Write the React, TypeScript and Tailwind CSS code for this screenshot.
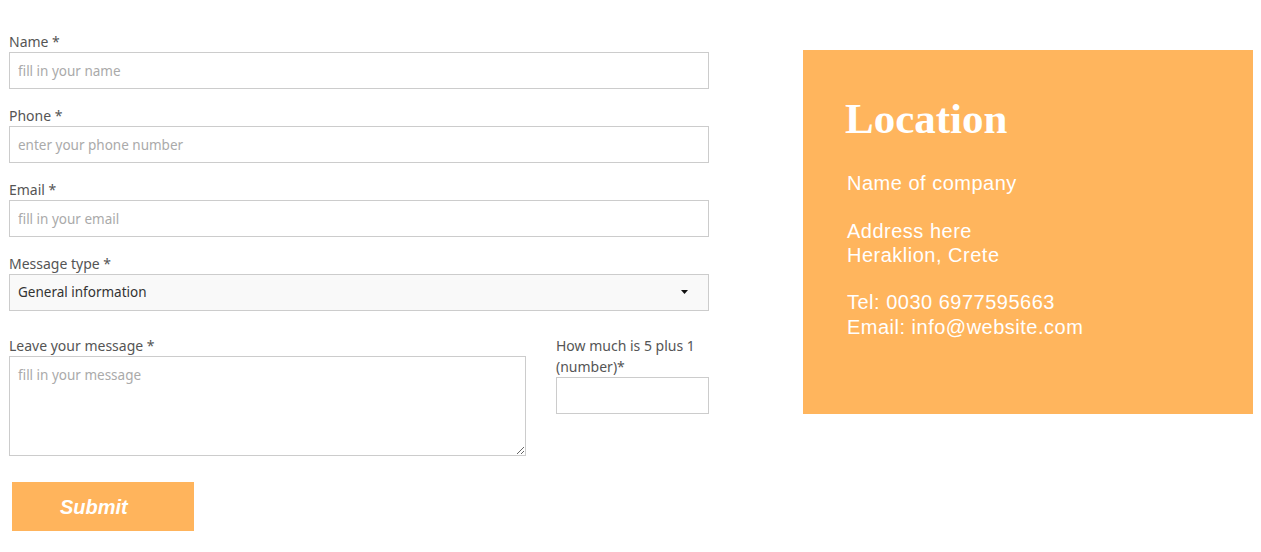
import React from 'react';

const labelCls = 'block text-[14px] leading-[20px] text-[#555]';
const inputCls =
  'block w-full h-[37px] border border-[#ccc] bg-white px-2 text-[13.5px] text-[#333] placeholder:text-[#aaa] outline-none';

const Field: React.FC<{ label: string; placeholder: string; type?: string }> = ({ label, placeholder, type = 'text' }) => (
  <div className="mb-[17px]">
    <label className={labelCls}>{label}</label>
    <input type={type} placeholder={placeholder} className={inputCls} />
  </div>
);

const App: React.FC = () => {
  return (
    <div className="min-h-screen bg-white font-['Noto_Sans',sans-serif]">
      <div className="flex pl-[9px]">
        {/* Contact form */}
        <form className="w-[700px] pt-[32px]" onSubmit={(e) => e.preventDefault()}>
          <Field label="Name *" placeholder="fill in your name" />
          <Field label="Phone *" placeholder="enter your phone number" type="tel" />
          <Field label="Email *" placeholder="fill in your email" type="email" />

          <div>
            <label className={labelCls}>Message type *</label>
            <div className="relative">
              <select className="block w-full h-[37px] appearance-none border border-[#ccc] bg-[#f9f9f9] px-2 text-[13.5px] text-[#333] outline-none">
                <option>General information</option>
              </select>
              <svg className="absolute right-[21px] top-[16px]" width="7" height="4" viewBox="0 0 7 4">
                <path d="M0 0h7L3.5 4z" fill="#111" />
              </svg>
            </div>
          </div>

          <div className="mt-[25px] flex gap-[30px]">
            <div className="w-[517px]">
              <label className={labelCls}>Leave your message *</label>
              <textarea
                placeholder="fill in your message"
                className="block w-full h-[100px] border border-[#ccc] bg-white px-2 pt-[8px] text-[13.5px] text-[#333] placeholder:text-[#aaa] outline-none"
              />
            </div>
            <div className="w-[153px] -mt-px">
              <label className="block text-[14px] leading-[21px] text-[#555]">How much is 5 plus 1 (number)*</label>
              <input type="text" className={inputCls} />
            </div>
          </div>

          <button
            type="submit"
            className="mt-[26px] ml-[3px] flex h-[49px] w-[182px] items-center pl-[48px] bg-[#ffb45c] text-[20px] font-bold italic text-white font-['Liberation_Sans',sans-serif]"
          >
            Submit
          </button>
        </form>

        {/* Location card */}
        <div className="ml-[94px] mt-[50px] h-[364px] w-[450px] bg-[#ffb55d] pl-[42px] pt-[45px] text-white">
          <h2 className="font-['Liberation_Serif',serif] text-[43px] font-bold leading-[48px]">Location</h2>
          <div className="mt-[28px] pl-[2px] font-['Liberation_Sans',sans-serif] text-[20px] leading-[24px] tracking-[0.5px]">
            <p>Name of company</p>
            <p className="mt-[24px]">Address here</p>
            <p>Heraklion, Crete</p>
            <p className="mt-[23px]">Tel: 0030 6977595663</p>
            <p className="mt-[1px]">Email: info@website.com</p>
          </div>
        </div>
      </div>
    </div>
  );
};

export default App;
